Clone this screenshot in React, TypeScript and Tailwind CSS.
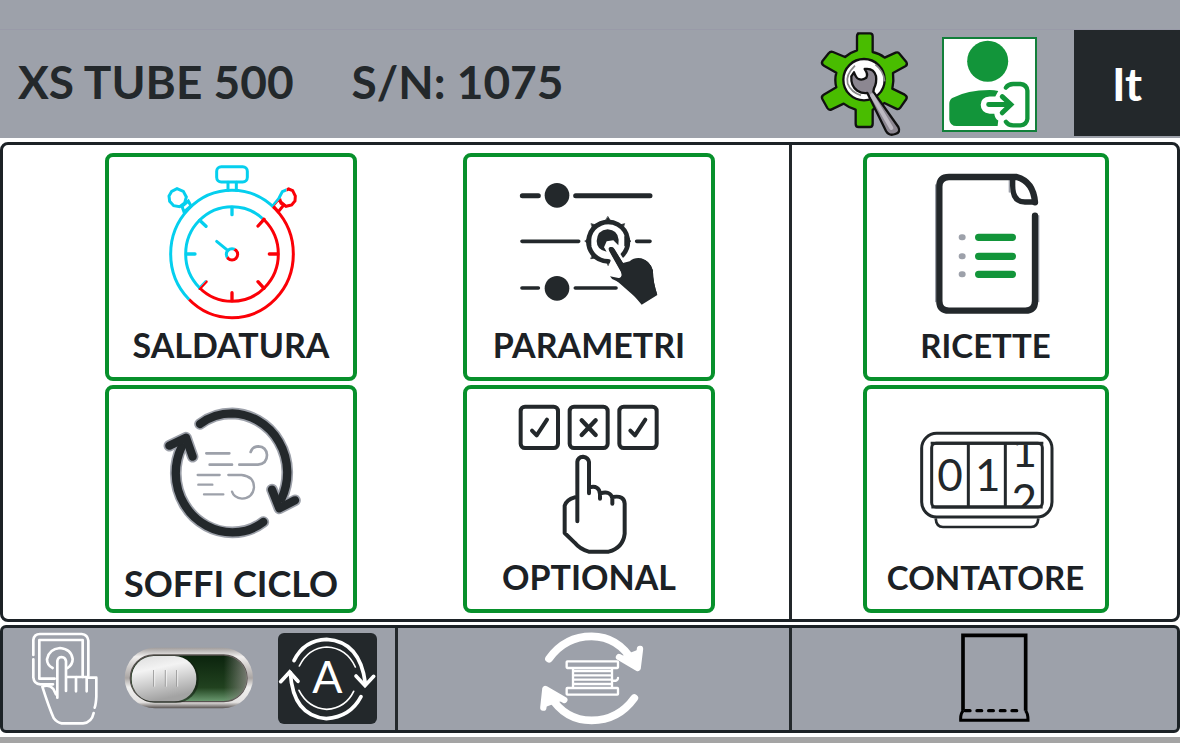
import { useState } from 'react'
import type { ReactNode } from 'react'

const INK = '#23282b'
const GREEN = '#12953a'
const STEEL = '#9da1aa'

// Stopwatch parts are shared by the cold (cyan) and hot (red) halves
function WatchStrokes() {
  return (
    <>
      <rect x="350" y="65" width="92" height="46" rx="14" />
      <path d="M384 112v24M409 112v24" />
      <ellipse cx="396" cy="327" rx="184" ry="191" />
      <ellipse cx="396" cy="327" rx="139" ry="142" />
      <path d="M396 187v22M396 443v24M260 327h25M508 327h25M299 226l19 18M492 223l-18 20M299 430l19-20M492 430l-18-20" strokeWidth="10" />
      <path d="M231 131l19 8 9 17-5 18-15 11-18-3-12-13-2-16 8-14z" />
      <path d="M246 184l19-16 8 15-21 18zM566 132l-19 8-9 17 5 18 15 9 17-4 10-12 1-15-8-16z" />
      <path d="M534 164l18 15-17 21-16-18z" />
      <circle cx="396" cy="328" r="17" />
      <path d="M383 316l-33-27" strokeWidth="9" />
    </>
  )
}

function SaldaturaIcon() {
  return (
    <svg viewBox="63 36 660 504" className="w-[220px] h-[168px]" fill="none" strokeWidth="9" strokeLinecap="round" aria-hidden="true">
      <defs>
        <clipPath id="cold"><path d="M0 0H560V140L180 560H0z" /></clipPath>
        <clipPath id="hot"><path d="M560 140L180 560H795V0H560z" /></clipPath>
      </defs>
      <g stroke="#05cfee" clipPath="url(#cold)"><WatchStrokes /></g>
      <g stroke="#fb0007" clipPath="url(#hot)"><WatchStrokes /></g>
    </svg>
  )
}

function ParametriIcon() {
  return (
    <svg viewBox="70 36 660 504" className="w-[220px] h-[168px]" fill={INK} stroke={INK} strokeLinecap="round" aria-hidden="true">
      <path d="M200 152h48M360 152h223" strokeWidth="15" />
      <path d="M199 289h170M543 289h40M199 429h49M359 429h122" strokeWidth="11" />
      <circle cx="304" cy="151" r="37" stroke="none" />
      <circle cx="304" cy="430" r="37" stroke="none" />
      <path d="M500 331a59 59 0 1 0-43 18" fill="none" strokeWidth="14" />
      <path d="M457 215l13 21h-26zM525 289l-18 14v-28zM388 289l18 14v-28zM407 236l17 5-11 14zM506 236l-17 5 11 14zM406 341l16-2-9-14zM457 361l-6-16h12z" strokeWidth="2" />
      <path d="M456 253q30 2 33 31l-1 17-15-15-20 3-8 18 8 13q-30-5-30-32 2-33 33-35z" stroke="none" />
      <path d="M463 302q-13 4-5 17l34 61q5 14-2 15l-25-1 12 13 82 72 50-30q-14-43-13-73-9-30-35-37-20-4-35 9l-20 5-28-44q-7-9-15-7z" stroke="#fff" strokeWidth="8" />
      <path d="M466 306q-10 4-5 13l35 62q7 15-4 19l-29-6q4 8 13 11l34 17 48 57 47-29q-14-43-13-73-9-30-35-37-20-4-35 9l-20 5-25-41q-5-9-11-7z" stroke="none" />
    </svg>
  )
}

function RicetteIcon() {
  return (
    <svg viewBox="63 36 660 504" className="w-[220px] h-[168px]" fill="none" strokeLinecap="round" strokeLinejoin="round" aria-hidden="true">
      <g stroke={STEEL} strokeWidth="4"><path d="M242 120v350M551 212v258M463 106v35" /></g>
      <g stroke={INK} strokeWidth="19">
        <path d="M540 212v256q0 29-29 29H282q-29 0-29-29V125q0-29 29-29h203q50 14 55 76" />
        <path d="M473 98v24q0 49 37 49h28" strokeWidth="16" />
      </g>
      <path d="M371 277h101M371 334h101M371 388h101" stroke={GREEN} strokeWidth="22" />
      <path d="M320 277h3M320 334h3M320 388h3" stroke={STEEL} strokeWidth="18" />
    </svg>
  )
}

function CycleStrokes() {
  return (
    <>
      <path d="M300 132Q341 100 397 100A170 178 0 0 1 545 355" />
      <path d="M490 426Q450 457 397 457A170 178 0 0 1 245 200" />
      <path d="M516 329l22 56 47-24" />
      <path d="M208 197l50-24 20 57" />
    </>
  )
}

function SoffiIcon() {
  return (
    <svg viewBox="63 27 660 504" className="w-[220px] h-[168px]" fill="none" strokeLinecap="round" strokeLinejoin="round" aria-hidden="true">
      <g stroke={STEEL} strokeWidth="35"><CycleStrokes /></g>
      <g stroke={INK} strokeWidth="25"><CycleStrokes /></g>
      <g stroke={STEEL} strokeWidth="8">
        <path d="M319 220h69M329 254h67M418 254h56q27-3 27-29-2-25-26-26-18 1-23 17" />
        <path d="M293 285h66M295 314h42M312 343h58M385 285h40q37 4 37 37-3 31-36 34-24-2-30-21" strokeWidth="7" />
      </g>
    </svg>
  )
}

function OptionalIcon() {
  return (
    <svg viewBox="70 27 660 504" className="w-[220px] h-[168px]" fill="none" stroke={INK} strokeWidth="12" strokeLinecap="round" strokeLinejoin="round" aria-hidden="true">
      <rect x="195" y="80" width="112" height="124" rx="13" />
      <rect x="342" y="80" width="114" height="124" rx="13" />
      <rect x="491" y="80" width="112" height="124" rx="13" />
      <path d="M229 152l14 14 31-47M524 152l14 14 31-47" />
      <path d="M378 121l42 44M420 121l-42 44" strokeWidth="13" />
      <path d="M365 424V245q2-14 17-15 16 2 18 16v94M401 322q30-7 32 20v14M434 340q29-9 36 14v17M471 351q35-6 36 20v90q-5 42-48 54h-60q-26-7-43-28l-29-28V377q5-18 30-25" />
    </svg>
  )
}

function ContatoreIcon() {
  return (
    <svg viewBox="63 27 660 504" className="w-[220px] h-[168px]" fill="none" stroke={INK} strokeWidth="9" aria-hidden="true">
      <defs>
        <clipPath id="wheel-up"><path d="M455 194h106v80H455z" /></clipPath>
        <clipPath id="wheel-down"><path d="M455 290h106v88H455z" /></clipPath>
      </defs>
      <rect x="200" y="160" width="391" height="251" rx="45" />
      <rect x="230" y="190" width="332" height="191" rx="13" />
      <path d="M340 191v190M451 191v190M227 190h338M229 381h334" />
      <path d="M242 415q2 26 22 26h264q20 0 22-26" strokeWidth="8" />
      <g className="font-['Lato',sans-serif] font-normal" fill={INK} stroke="none" fontSize="132" textAnchor="middle">
        <text x="285" y="332">0</text>
        <text x="398" y="332">1</text>
        <text x="508" y="261" clipPath="url(#wheel-up)">1</text>
        <text x="508" y="407" clipPath="url(#wheel-down)">2</text>
      </g>
    </svg>
  )
}

function GearIcon() {
  return (
    <svg viewBox="75 24 288 330" className="w-24 h-[110px]" stroke="#111" strokeWidth="7" strokeLinejoin="round" aria-hidden="true">
      <path fill="#49bd00" d="M204 37h36q8 0 8 9v47q20 4 36 17l33-15q8-3 12 4l20 24q5 8-3 13l-37 20q3 24-2 47l37 18q9 5 5 13l-18 26q-5 7-13 3l-35-17q-15 14-35 20v42q0 10-9 10h-33q-9 0-9-10v-42q-19-5-36-18l-36 17q-8 4-13-4l-15-27q-4-8 4-13l38-22q-6-22 0-44l-37-21q-9-5-5-13l19-24q5-7 13-4l36 15q16-14 36-20V46q0-9 8-9z" />
      <circle cx="222" cy="176" r="62" fill="#fff" />
      <path d="M195 134q-29 28-22 54 10 26 40 35M256 131q25 18 28 50" fill="none" stroke="#888" strokeWidth="5" />
      <path fill="#8c8791" d="M224 144q27-4 34 21 3 20-6 37l-2 10 75 106q8 16-9 21-19 7-28-9l-56-114q-16 2-30-7-20-13-18-43l8-12q7 18 14 20 10 5 23-4 6-11-5-26z" />
      <path d="M246 223l58 98" stroke="#bdb9c2" strokeWidth="12" strokeLinecap="round" />
    </svg>
  )
}

function UserLoginIcon() {
  return (
    <svg viewBox="462 57 275 273" className="w-full h-full" fill={GREEN} aria-hidden="true">
      <circle cx="594" cy="123" r="62" />
      <path d="M478 252q0-12 9-18 46-24 113-24 14 0 26 3l-9 17h-17q-27 2-27 25t27 27h14q2 16 12 20l-2 17H500q-20 0-22-20z" />
      <path d="M649 203q7-11 22-11h22q19 2 21 20v85q-2 18-21 20h-22q-15 0-22-11" fill="none" stroke={GREEN} strokeWidth="13" strokeLinecap="round" />
      <path d="M597 254h64M638 230l26 24-26 25" fill="none" stroke={GREEN} strokeWidth="15" strokeLinecap="round" />
    </svg>
  )
}

function ManualIcon() {
  return (
    <svg viewBox="93 66 204 285" className="w-[68px] h-[95px]" fill="none" stroke="#fff" strokeWidth="8" strokeLinecap="round" strokeLinejoin="round" aria-hidden="true">
      <path d="M100 138V93q2-18 20-18h125q18 2 20 20v105M100 151v54q2 20 21 21h38M118 209V93h130v111M118 209h46" />
      <path d="M158 177q-17-8-17-26 5-31 39-34 34 3 38 33 0 17-15 27" />
      <path d="M172 266V156q2-12 13-12 11 1 13 12v90M198 204h30v43M230 204h30v43M262 206h27v57q-1 22-5 33M281 312q-6 29-32 31h-64q-15-3-24-16-14-31-34-94 22-8 33 7l8 16" />
    </svg>
  )
}

function AutoIcon() {
  return (
    <svg viewBox="835 67 297 273" className="w-[99px] h-[91px]" fill="none" stroke="#fff" strokeWidth="11" strokeLinecap="round" aria-hidden="true">
      <path d="M883 150q30-62 98-64 100 6 116 132M1084 258q-32 61-104 66-100-8-108-138" />
      <path d="M1069 196l27 29 26-28M843 213l27-29 25 28" />
      <path d="M899 166q27-54 82-57 60 3 86 60M898 239q27 53 83 57 57-4 81-54" strokeWidth="5" />
      <text x="983" y="247" className="font-['Lato',sans-serif]" fontSize="134" textAnchor="middle" fill="#fff" stroke="none">A</text>
    </svg>
  )
}

function ReelIcon() {
  return (
    <svg viewBox="441 66 327 285" className="w-[109px] h-[95px]" fill="none" stroke="#fff" strokeLinecap="round" strokeLinejoin="round" aria-hidden="true">
      <g strokeWidth="23">
        <path d="M477 149Q525 82 605 82T730 160M733 267Q685 334 605 334T480 260" />
        <path d="M687 144l56 33 7-57M523 273l-57-33-6 56" fill="#fff" strokeWidth="19" />
      </g>
      <g strokeWidth="7">
        <rect x="530" y="157" width="154" height="20" rx="2" />
        <rect x="530" y="237" width="154" height="20" rx="2" />
        <path d="M549 180v56M666 180v56M552 186h112M552 199h112M552 212h112M552 225h112M667 215q17 2 17-8" />
      </g>
    </svg>
  )
}

function BagIcon() {
  return (
    <svg viewBox="539 69 213 270" className="w-[71px] h-[90px]" fill="none" stroke="#000" strokeWidth="11" aria-hidden="true">
      <path d="M551 302V76h188v226" />
      <path d="M552 302q-9 8-8 29h202q0-22-8-29" strokeWidth="9" />
      <path d="M558 302h174" strokeDasharray="14 21" strokeWidth="10" strokeLinecap="round" />
    </svg>
  )
}

function ModeSwitch() {
  const [auto, setAuto] = useState(false)

  return (
    <label className="cursor-pointer">
      <input type="checkbox" role="switch" aria-label="Automatico" checked={auto} onChange={e => setAuto(e.target.checked)} className="sr-only" />
      <svg viewBox="366 108 390 186" className="w-[130px] h-[62px]" aria-hidden="true">
        <defs>
          <linearGradient id="rim" x1="0" y1="0" x2="0" y2="1">
            <stop offset="0" stopColor="#a09c9b" />
            <stop offset=".15" stopColor="#f1efee" />
            <stop offset=".5" stopColor="#aaa5a3" />
            <stop offset=".65" stopColor="#efefee" />
            <stop offset=".9" stopColor="#e4e2e1" />
            <stop offset="1" stopColor="#55504e" />
          </linearGradient>
          <linearGradient id="slot" x1="0" y1="0" x2="0" y2="1">
            <stop offset="0" stopColor="#0b230d" />
            <stop offset=".7" stopColor="#21421f" />
            <stop offset="1" stopColor="#6c9c72" />
          </linearGradient>
          <linearGradient id="slot-end">
            <stop offset=".8" stopColor="#8b8b85" stopOpacity="0" />
            <stop offset="1" stopColor="#8b8b85" stopOpacity=".8" />
          </linearGradient>
          <linearGradient id="knob" x1="0" y1="0" x2=".3" y2="1">
            <stop offset="0" stopColor="#dcdcdc" />
            <stop offset=".35" stopColor="#f3f3f3" />
            <stop offset="1" stopColor="#a3a3a3" />
          </linearGradient>
        </defs>
        <rect x="368" y="110" width="385" height="182" rx="91" fill="url(#rim)" />
        <rect x="385" y="132" width="350" height="140" rx="70" fill="url(#slot)" stroke="#57514f" strokeWidth="4" />
        <rect x="385" y="132" width="350" height="140" rx="70" fill="url(#slot-end)" />
        <g transform={auto ? 'translate(150 0)' : undefined}>
          <rect x="391" y="136" width="199" height="140" rx="68" fill="#101c10" opacity=".6" />
          <rect x="389" y="135" width="194" height="136" rx="66" fill="url(#knob)" />
          <path d="M455 177v50M490 177v50M524 177v50" stroke="#999" strokeWidth="3" />
          <path d="M458 177v50M493 177v50M527 177v50" stroke="#fff" strokeWidth="2" />
        </g>
      </svg>
    </label>
  )
}

function Tile({ label, large = false, wide = false, children }: { label: string; large?: boolean; wide?: boolean; children: ReactNode }) {
  return (
    <button className={`flex flex-col items-center h-[228px] rounded-lg border-4 border-[#07902b] bg-white text-[#1c2125] font-bold whitespace-nowrap ${wide ? 'w-[252px] text-[34px]' : 'w-[246px] text-[33px]'}`}>
      {children}
      <span className={large ? 'text-[36px] leading-[52px]' : 'leading-[40px]'}>{label}</span>
    </button>
  )
}

export default function App() {
  return (
    <div className="min-h-screen flex flex-col bg-[#a4a4a4] font-['Lato',sans-serif]">
      <div className="h-[30px] bg-[#9da1aa] border-b border-[#999aa8]" />

      <header className="flex items-center h-[108px] pl-[18px] bg-[#9da1aa] text-[#23282b]">
        <div className="flex gap-[58px] pb-1 text-[46px] leading-[52px] font-bold whitespace-nowrap">
          <h1>XS TUBE 500</h1>
          <p>S/N: 1075</p>
        </div>
        <div className="ml-auto flex items-center h-full">
          <button aria-label="Impostazioni"><GearIcon /></button>
          <button aria-label="Accesso utente" className="ml-[31px] w-[95px] h-[95px] bg-white border-2 border-[#12803a]"><UserLoginIcon /></button>
          <button className="ml-[37px] w-[106px] h-[106px] self-start bg-[#23282b] text-white text-[46px] font-bold">It</button>
        </div>
      </header>

      <div className="bg-white pt-1 pb-1">
        <main className="grid grid-cols-[789fr_385fr] rounded-lg border-[3px] border-[#1c2226] bg-white">
          <section className="flex justify-between pt-2 pb-[6px] pl-[102px] pr-[74px] border-r-[3px] border-[#23282b]">
            <div className="flex flex-col gap-1">
              <Tile label="SALDATURA" wide><SaldaturaIcon /></Tile>
              <Tile label="SOFFI CICLO" wide large><SoffiIcon /></Tile>
            </div>
            <div className="flex flex-col gap-1">
              <Tile label="PARAMETRI" wide><ParametriIcon /></Tile>
              <Tile label="OPTIONAL" wide><OptionalIcon /></Tile>
            </div>
          </section>
          <section className="flex flex-col items-center gap-1 pt-2 pb-[6px] pl-[2px]">
            <Tile label="RICETTE"><RicetteIcon /></Tile>
            <Tile label="CONTATORE"><ContatoreIcon /></Tile>
          </section>
        </main>

        <footer className="mt-[3px] grid grid-cols-[395fr_394fr_385fr] h-[108px] rounded-md border-[3px] border-[#1c2226] bg-[#9da1aa]">
          <div className="flex items-center justify-between pb-[2px] pl-7 pr-[18px] border-r-[3px] border-[#23282b]">
            <ManualIcon />
            <ModeSwitch />
            <button aria-label="Ciclo automatico" className="rounded-md bg-[#23282b]"><AutoIcon /></button>
          </div>
          <div className="flex items-center justify-center pb-[2px] pr-1 border-r-[3px] border-[#23282b]">
            <button aria-label="Cambio bobina"><ReelIcon /></button>
          </div>
          <div className="flex items-center justify-center pb-[2px] pl-5">
            <button aria-label="Sacchetto"><BagIcon /></button>
          </div>
        </footer>
      </div>
    </div>
  )
}
